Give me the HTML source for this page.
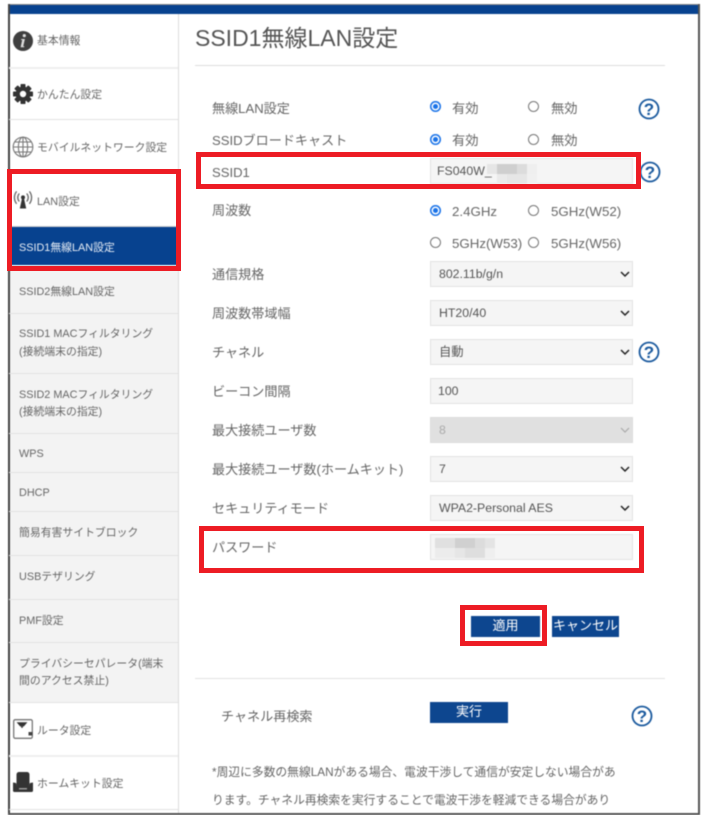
<!DOCTYPE html>
<html lang="ja"><head><meta charset="utf-8"><title>SSID1無線LAN設定</title>
<style>
html,body{margin:0;padding:0;background:#fff}
body{width:703px;height:820px;overflow:hidden;position:relative;font-family:"Liberation Sans","Noto Sans CJK JP",sans-serif;color:#666}
.a,.t,.f,.s,.r,.b,.q,.n,.sep,.red,.m{position:absolute}
.wrap{position:absolute;left:0;top:0;width:703px;height:820px;filter:blur(.4px)}
.t{white-space:nowrap;line-height:16px}
.n{left:19px;font-size:10.85px;line-height:17px;color:#666;white-space:nowrap}
.l{position:absolute;left:212px;font-size:13.1px;line-height:18px;white-space:nowrap;color:#666}
.sep{left:9px;width:169px;height:1px;background:#e2e2e2}
.f{left:430px;width:201px;height:24px;background:#f5f5f5;border:1px solid #e3e3e3;font-size:12.3px;line-height:24px;color:#555;text-indent:8px}
.s svg{position:absolute;right:1px;top:8px}
.r{width:9px;height:9px;border:1px solid #777;border-radius:50%;background:#fff}
.r.on{width:11px;height:11px;border:0;background:#1a73e8;box-shadow:inset 0 0 0 1.5px #1a73e8,inset 0 0 0 3px #fff}
.o{position:absolute;font-size:13.3px;line-height:18px;color:#666;white-space:nowrap}
.b{background:#0d468f;color:#fff;font-size:13px;text-align:center;line-height:19px;height:21px}
.red{border:5px solid #ed1c24;box-sizing:border-box}
.m{width:10px;height:10px}
</style></head><body>
<div class="wrap">
<!-- frame -->
<div class="a" style="left:8px;top:4px;width:691px;height:1px;background:#888"></div>
<div class="a" style="left:9px;top:5px;width:690px;height:9px;background:#07428f"></div>
<div class="a" style="left:8px;top:4px;width:2px;height:811px;background:#444"></div>
<div class="a" style="left:698px;top:4px;width:2px;height:811px;background:#555"></div>
<div class="a" style="left:8px;top:813px;width:692px;height:2px;background:#555"></div>
<div class="a" style="left:178px;top:14px;width:1px;height:799px;background:#ddd"></div>
<!-- sidebar -->
<div class="a" style="left:10px;top:265px;width:168px;height:437px;background:#f3f3f3"></div>
<div class="a" style="left:10px;top:227px;width:168px;height:38px;background:#07428f"></div>
<div class="sep" style="top:67px;height:2px;background:#eee"></div>
<div class="sep" style="top:119px"></div>
<div class="sep" style="top:226px;background:#ccc"></div>
<div class="sep" style="top:313px"></div>
<div class="sep" style="top:373px"></div>
<div class="sep" style="top:433px"></div>
<div class="sep" style="top:472px"></div>
<div class="sep" style="top:511px"></div>
<div class="sep" style="top:555px"></div>
<div class="sep" style="top:599px"></div>
<div class="sep" style="top:642px"></div>
<div class="sep" style="top:702px"></div>
<div class="sep" style="top:755px;height:2px;background:#eee"></div>
<div class="sep" style="top:809px"></div>

<svg class="a" style="left:12px;top:30px" width="22" height="22" viewBox="0 0 22 22"><circle cx="11" cy="11" r="10" fill="#3f3f3f"/><circle cx="12.3" cy="5.6" r="1.6" fill="#ddd"/><path d="M9.3 9h3.6l-1.7 7.3h1.2l-.3 1h-3.5l1.6-7.3H9z" fill="#ddd"/></svg>
<svg class="a" style="left:12px;top:83px" width="22" height="22" viewBox="0 0 22 22"><g fill="#333"><circle cx="11" cy="11" r="7.4"/><g id="x"><rect x="8.5" y="1" width="5" height="20" rx=".8"/><rect x="8.5" y="1" width="5" height="20" rx=".8" transform="rotate(45 11 11)"/><rect x="8.5" y="1" width="5" height="20" rx=".8" transform="rotate(90 11 11)"/><rect x="8.5" y="1" width="5" height="20" rx=".8" transform="rotate(135 11 11)"/></g></g><circle cx="11" cy="11" r="3.2" fill="#fff"/></svg>
<svg class="a" style="left:12px;top:136px" width="22" height="22" viewBox="0 0 22 22" fill="none" stroke="#777" stroke-width="1.1"><circle cx="11" cy="11" r="9.8"/><ellipse cx="11" cy="11" rx="4.6" ry="9.8"/><path d="M11 1v20M1.2 11h19.6M2.7 6h16.600M2.7 16h16.600"/></svg>
<svg class="a" style="left:12px;top:189px" width="22" height="22" viewBox="0 0 22 22" fill="none" stroke="#666" stroke-width="1.3"><path d="M7.3 4.5a6 6 0 0 0 0 8M14.7 4.5a6 6 0 0 1 0 8M4.6 2.4a10 10 0 0 0 0 12.4M17.4 2.4a10 10 0 0 1 0 12.4"/><circle cx="11" cy="8.4" r="2" fill="#333" stroke="none"/><path d="M10 9.5h2l2.2 10H7.800z" fill="#333" stroke="none"/></svg>
<svg class="a" style="left:13px;top:719px" width="20" height="20" viewBox="0 0 20 20"><rect x=".7" y=".7" width="18.600" height="18.600" rx="1.500" fill="#fff" stroke="#777" stroke-width="1.300"/><path d="M3.600 3.300h10.800l-3.400 3.900h-4z" fill="#333"/><path d="M7.400 7.200h3.200l-1.600 2z" fill="#333"/><rect x="15.500" y="13" width="4" height="3.500" fill="#444"/></svg>
<svg class="a" style="left:12px;top:771px" width="22" height="22" viewBox="0 0 22 22"><rect x="4.500" y="1" width="13" height="15" rx="2.500" fill="#333"/><path d="M1 11.500l3 .5 1 3h12l1-3 3-.5v8a1.500 1.500 0 0 1-1.500 1.500h-17A1.500 1.500 0 0 1 1 19.500z" fill="#333"/><rect x="7" y="17" width="8" height="1.500" fill="#999"/></svg>

<div class="n" style="left:37px;top:33px">基本情報</div>
<div class="n" style="left:37px;top:87px">かんたん設定</div>
<div class="n" style="left:37px;top:140px">モバイルネットワーク設定</div>
<div class="n" style="left:37px;top:194px">LAN設定</div>
<div class="n" style="top:240px;color:#e8eef6">SSID1無線LAN設定</div>
<div class="n" style="top:284px">SSID2無線LAN設定</div>
<div class="n" style="top:326px">SSID1 MACフィルタリング</div>
<div class="n" style="top:344px">(接続端末の指定)</div>
<div class="n" style="top:387px">SSID2 MACフィルタリング</div>
<div class="n" style="top:404px">(接続端末の指定)</div>
<div class="n" style="top:446px">WPS</div>
<div class="n" style="top:485px">DHCP</div>
<div class="n" style="top:525px">簡易有害サイトブロック</div>
<div class="n" style="top:569px">USBテザリング</div>
<div class="n" style="top:613px">PMF設定</div>
<div class="n" style="top:656px">プライバシーセパレータ(端末</div>
<div class="n" style="top:673px">間のアクセス禁止)</div>
<div class="n" style="left:37px;top:723px">ルータ設定</div>
<div class="n" style="left:37px;top:776px">ホームキット設定</div>

<!-- main -->
<div class="t" style="left:195px;top:23px;font-size:23px;line-height:30px;color:#555">SSID1無線LAN設定</div>
<div class="a" style="left:195px;top:65px;width:470px;height:1px;background:#ddd"></div>

<div class="l" style="top:100px">無線LAN設定</div>
<div class="l" style="top:132px">SSIDブロードキャスト</div>
<div class="l" style="top:164px">SSID1</div>
<div class="l" style="top:202px">周波数</div>
<div class="l" style="top:266px">通信規格</div>
<div class="l" style="top:305px">周波数帯域幅</div>
<div class="l" style="top:344px">チャネル</div>
<div class="l" style="top:383px">ビーコン間隔</div>
<div class="l" style="top:422px">最大接続ユーザ数</div>
<div class="l" style="top:461px">最大接続ユーザ数(ホームキット)</div>
<div class="l" style="top:500px">セキュリティモード</div>
<div class="l" style="top:539px">パスワード</div>

<div class="r on" style="left:430px;top:101px"></div><div class="o" style="left:452px;top:100px">有効</div>
<div class="r" style="left:528px;top:101px"></div><div class="o" style="left:551px;top:100px">無効</div>
<div class="r on" style="left:430px;top:134px"></div><div class="o" style="left:452px;top:132px">有効</div>
<div class="r" style="left:528px;top:134px"></div><div class="o" style="left:551px;top:132px">無効</div>
<div class="r on" style="left:430px;top:205px"></div><div class="o" style="left:452px;top:203px">2.4GHz</div>
<div class="r" style="left:528px;top:205px"></div><div class="o" style="left:551px;top:203px">5GHz(W52)</div>
<div class="r" style="left:430px;top:237px"></div><div class="o" style="left:452px;top:235px">5GHz(W53)</div>
<div class="r" style="left:528px;top:237px"></div><div class="o" style="left:551px;top:235px">5GHz(W56)</div>

<div class="f" style="top:158px;text-indent:6px">FS040W_</div>
<div class="f s" style="top:261px">802.11b/g/n<svg width="12" height="8" viewBox="0 0 12 8"><path d="M2 2l4 4 4-4" fill="none" stroke="#222" stroke-width="1.500"/></svg></div>
<div class="f s" style="top:300px">HT20/40<svg width="12" height="8" viewBox="0 0 12 8"><path d="M2 2l4 4 4-4" fill="none" stroke="#222" stroke-width="1.500"/></svg></div>
<div class="f s" style="top:339px">自動<svg width="12" height="8" viewBox="0 0 12 8"><path d="M2 2l4 4 4-4" fill="none" stroke="#222" stroke-width="1.500"/></svg></div>
<div class="f" style="top:378px;text-indent:7px">100</div>
<div class="f s" style="top:417px;background:#e0e0e0;border-color:#dcdcdc;color:#aaa">8<svg width="12" height="8" viewBox="0 0 12 8"><path d="M2 2l4 4 4-4" fill="none" stroke="#aaa" stroke-width="1.200"/></svg></div>
<div class="f s" style="top:456px">7<svg width="12" height="8" viewBox="0 0 12 8"><path d="M2 2l4 4 4-4" fill="none" stroke="#222" stroke-width="1.500"/></svg></div>
<div class="f s" style="top:495px">WPA2-Personal AES<svg width="12" height="8" viewBox="0 0 12 8"><path d="M2 2l4 4 4-4" fill="none" stroke="#222" stroke-width="1.500"/></svg></div>
<div class="f" style="top:534px"></div>

<!-- mosaics -->
<div class="m" style="left:487px;top:164px;background:#e6e6e6"></div>
<div class="m" style="left:497px;top:164px;width:20px;background:#cfcfcf"></div>
<div class="m" style="left:517px;top:164px;background:#dcdcdc"></div>
<div class="m" style="left:527px;top:164px;background:#efefef"></div>
<div class="m" style="left:497px;top:174px;background:#eaeaea"></div>
<div class="m" style="left:507px;top:174px;width:20px;background:#e6e6e6"></div>
<div class="m" style="left:527px;top:174px;background:#f0f0f0"></div>
<div class="m" style="left:435px;top:538px;width:20px;background:#e0e0e0"></div>
<div class="m" style="left:455px;top:538px;width:20px;background:#d0d0d0"></div>
<div class="m" style="left:475px;top:538px;background:#dcdcdc"></div>
<div class="m" style="left:485px;top:538px;background:#e4e4e4"></div>
<div class="m" style="left:435px;top:548px;width:20px;background:#ececec"></div>
<div class="m" style="left:455px;top:548px;background:#e6e6e6"></div>
<div class="m" style="left:465px;top:548px;width:20px;background:#dedede"></div>
<div class="m" style="left:485px;top:548px;background:#efefef"></div>

<svg class="a" style="left:638px;top:98px" width="22" height="22" viewBox="0 0 22 22"><circle cx="11" cy="11" r="9.500" fill="#fff" stroke="#1b5a9e" stroke-width="1.800"/><text x="11" y="17" text-anchor="middle" font-family="Liberation Sans" font-weight="bold" font-size="17" fill="#1b5a9e">?</text></svg>
<svg class="a" style="left:639px;top:161px" width="22" height="22" viewBox="0 0 22 22"><circle cx="11" cy="11" r="9.500" fill="#fff" stroke="#1b5a9e" stroke-width="1.800"/><text x="11" y="17" text-anchor="middle" font-family="Liberation Sans" font-weight="bold" font-size="17" fill="#1b5a9e">?</text></svg>
<svg class="a" style="left:638px;top:341px" width="22" height="22" viewBox="0 0 22 22"><circle cx="11" cy="11" r="9.500" fill="#fff" stroke="#1b5a9e" stroke-width="1.800"/><text x="11" y="17" text-anchor="middle" font-family="Liberation Sans" font-weight="bold" font-size="17" fill="#1b5a9e">?</text></svg>
<svg class="a" style="left:631px;top:705px" width="22" height="22" viewBox="0 0 22 22"><circle cx="11" cy="11" r="9.500" fill="#fff" stroke="#1b5a9e" stroke-width="1.800"/><text x="11" y="17" text-anchor="middle" font-family="Liberation Sans" font-weight="bold" font-size="17" fill="#1b5a9e">?</text></svg>

<div class="b" style="left:471px;top:616px;width:69px">適用</div>
<div class="b" style="left:552px;top:616px;width:67px;white-space:nowrap">キャンセル</div>
<div class="a" style="left:195px;top:678px;width:470px;height:1px;background:#e2e2e2"></div>
<div class="l" style="left:221px;top:708px">チャネル再検索</div>
<div class="b" style="left:430px;top:702px;width:78px">実行</div>
<div class="t" style="left:212px;top:765px;font-size:11.78px;color:#666">*周辺に多数の無線LANがある場合、電波干渉して通信が安定しない場合があ</div>
<div class="t" style="left:212px;top:793px;font-size:11.78px;color:#666">ります。チャネル再検索を実行することで電波干渉を軽減できる場合があり</div>
</div>
<div class="a" style="left:0;top:815px;width:703px;height:5px;background:#fff"></div>
<!-- red highlight boxes -->
<div class="red" style="left:7px;top:169px;width:174px;height:102px"></div>
<div class="red" style="left:196px;top:152px;width:445px;height:37px"></div>
<div class="red" style="left:199px;top:526px;width:445px;height:47px"></div>
<div class="red" style="left:460px;top:605px;width:87px;height:41px"></div>
</body></html>
